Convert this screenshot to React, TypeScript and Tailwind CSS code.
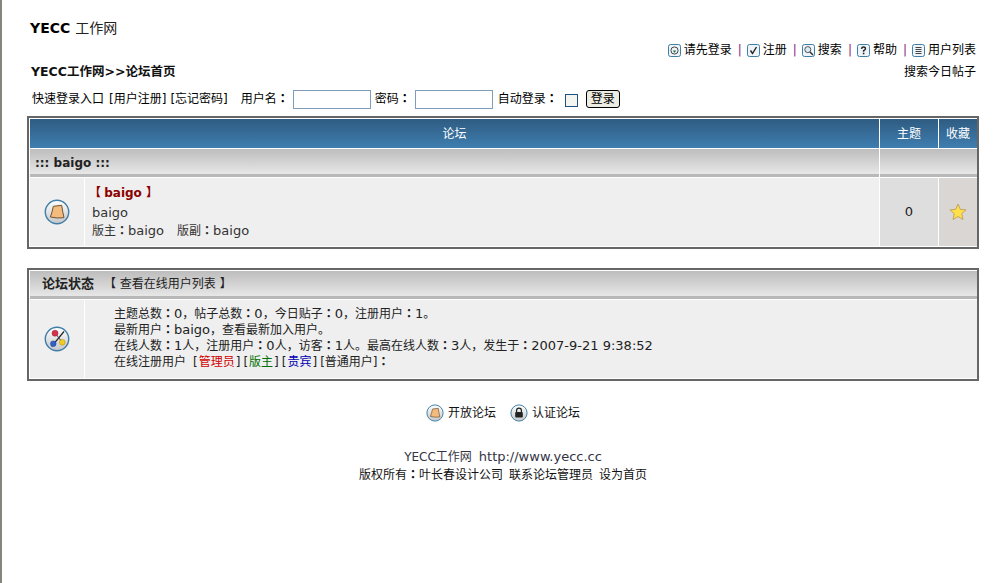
const font = { fontFamily: '"DejaVu Sans", "Noto Sans CJK SC", sans-serif' };

const RoundIcon = ({ size = 26, children }: { size?: number; children: React.ReactNode }) => (
  <svg width={size} height={size} viewBox="0 0 26 26" className="block shrink-0">
    <defs>
      <linearGradient id="ball" x1="0" y1="0" x2="0" y2="1">
        <stop offset="0" stopColor="#ffffff" />
        <stop offset="1" stopColor="#c4c6c8" />
      </linearGradient>
    </defs>
    <circle cx="13" cy="13" r="11.7" fill="url(#ball)" stroke="#3f7ea6" strokeWidth="1.4" />
    {children}
  </svg>
);

const PaperShape = () => (
  <path d="M9.3 7.3 L17.7 6.3 Q18.6 13 20 18.7 Q13 19.6 6.4 18 Q8.3 13 9.3 7.3 Z" fill="#f3bb7c" stroke="#6f5537" strokeWidth="1" strokeLinejoin="round" />
);

const StatsShape = () => (
  <g>
    <line x1="20" y1="5.5" x2="7.7" y2="20.3" stroke="#222" strokeWidth="1.2" />
    <line x1="11" y1="7" x2="18.3" y2="16.3" stroke="#444" strokeWidth="1" />
    <circle cx="11" cy="7.2" r="3" fill="#d9304e" stroke="#8a1a2c" strokeWidth="0.5" />
    <circle cx="18.3" cy="16.3" r="2.9" fill="#f2cc22" stroke="#a88a10" strokeWidth="0.5" />
    <circle cx="9.3" cy="17.7" r="2.8" fill="#2f62cc" stroke="#1a3a80" strokeWidth="0.5" />
  </g>
);

const SmallBox = ({ children }: { children: React.ReactNode }) => (
  <svg width="13" height="13" viewBox="0 0 13 13" className="block shrink-0">
    <rect x="0.5" y="0.5" width="12" height="12" rx="2" fill="#eef4f8" stroke="#3f7ea6" />
    {children}
  </svg>
);

const Sep = () => <span className="ml-[6px] mr-[5px] text-[#8a1a7a]">|</span>;

// latin runs are a size up from the chinese text
const L = ({ children }: { children: React.ReactNode }) => <span className="text-[13px] leading-none">{children}</span>;

// centred full width colon
const C = () => <span className="font-['Noto_Sans_CJK_TC'] font-bold leading-none">：</span>;

const NavItem = ({ icon, label }: { icon: React.ReactNode; label: string }) => (
  <span className="flex items-center gap-[3px]">
    {icon}
    {label}
  </span>
);

const headCell = "flex items-center justify-center bg-gradient-to-b from-[#2f5c82] to-[#3e7eb0]";
const barCell = "bg-gradient-to-b from-[#bdbdbd] to-[#ececec] shadow-[inset_0_-3px_0_#b8b8b8]";

const App = () => {
  return (
    <div style={font} className="min-h-[583px] border-l-2 border-[#85857b] bg-white pl-[25px] pr-[27px] text-[12px] leading-[14px] text-black">
      <div className="flex h-[36px] items-end pl-[3px]">
        <span className="text-[14px] font-bold leading-[16px]">YECC</span>
        <span className="ml-[5px] text-[14px] leading-[16px] text-[#222]">工作网</span>
      </div>

      <div className="mt-[7px] flex h-[14px] items-center justify-end pr-[3px]">
        <NavItem
          label="请先登录"
          icon={
            <SmallBox>
              <circle cx="6.5" cy="6.5" r="3.6" fill="none" stroke="#444" />
              <path d="M4.8 6.5 L8.2 6.5 L6.5 9 Z" fill="#2a7a4a" />
            </SmallBox>
          }
        />
        <Sep />
        <NavItem
          label="注册"
          icon={
            <SmallBox>
              <path d="M3.5 6.5 L5.5 9.5 L9.5 3" fill="none" stroke="#222" strokeWidth="1.4" />
            </SmallBox>
          }
        />
        <Sep />
        <NavItem
          label="搜索"
          icon={
            <SmallBox>
              <circle cx="5.8" cy="5.6" r="3" fill="#dceaf4" stroke="#555" />
              <path d="M8 8 L11 11" stroke="#333" strokeWidth="1.5" />
            </SmallBox>
          }
        />
        <Sep />
        <NavItem
          label="帮助"
          icon={
            <SmallBox>
              <path d="M4.5 4.8 Q4.8 3 6.6 3 Q8.6 3 8.4 4.8 Q8.2 5.8 6.6 6.6 L6.6 7.8" fill="none" stroke="#222" strokeWidth="1.5" />
              <rect x="5.8" y="8.7" width="1.6" height="1.6" fill="#222" />
            </SmallBox>
          }
        />
        <Sep />
        <NavItem
          label="用户列表"
          icon={
            <SmallBox>
              <path d="M3.5 3.5 H9.5 M3.5 5.5 H9.5 M3.5 7.5 H9.5 M3.5 9.5 H9.5" stroke="#444" />
            </SmallBox>
          }
        />
      </div>

      <div className="mt-[8px] flex h-[14px] items-center justify-between pl-[4px] pr-[3px]">
        <span className="text-[12.5px] font-bold text-[#111]">YECC工作网&gt;&gt;论坛首页</span>
        <span>搜索今日帖子</span>
      </div>

      <div className="mt-[8px] flex h-[24px] items-center pl-[5px]">
        <span>快速登录入口</span>
        <span className="ml-[5px]">[用户注册]</span>
        <span className="ml-[4px]">[忘记密码]</span>
        <span className="ml-[13px]">用户名<C /></span>
        <input className="ml-[4px] h-[19px] w-[78px] border border-[#7f9db9] bg-white" />
        <span className="ml-[4px]">密码<C /></span>
        <input className="ml-[4px] h-[19px] w-[78px] border border-[#7f9db9] bg-white" />
        <span className="ml-[5px]">自动登录<C /></span>
        <span className="ml-[7px] mt-[2px] h-[13px] w-[13px] border border-[#1c5180] bg-[#f4f4f0]" />
        <button className="ml-[8px] h-[18px] w-[34px] rounded-[3px] border border-black bg-[#ecebe4] text-[12px] leading-[14px]">登录</button>
      </div>

      <div className="mt-[5px] border-2 border-[#666] bg-white pb-[1px] pl-[1px] pt-[1px]">
        <div className="grid h-[29px] grid-cols-[1fr_58px_38px] gap-x-[1px] text-white">
          <div className={headCell}>论坛</div>
          <div className={headCell}>主题</div>
          <div className={headCell}>收藏</div>
        </div>
        <div className="mt-[1px] grid h-[28px] grid-cols-[1fr_97px] gap-x-[1px]">
          <div className={`${barCell} flex items-center pl-[5px] font-bold text-[#222]`}>::: baigo :::</div>
          <div className={barCell} />
        </div>
        <div className="mt-[1px] grid h-[68px] grid-cols-[54px_1fr_58px_38px] gap-x-[1px]">
          <div className="flex items-center justify-center bg-[#efefef]">
            <RoundIcon>
              <PaperShape />
            </RoundIcon>
          </div>
          <div className="bg-[#efefef] pl-[7px] pt-[7px] text-[#333]">
            <div className="-ml-[3px] h-[17px] font-bold leading-[16px] text-[#8b0000]">
              【<span className="ml-[-1px]"> baigo </span>】
            </div>
            <div className="mt-[3px] h-[16px] leading-[16px]">
              <L>baigo</L>
            </div>
            <div className="mt-[2px] h-[16px] leading-[16px]">
              版主<C /><L>baigo</L>
              <span className="ml-[13px]">版副<C /></span>
              <L>baigo</L>
            </div>
          </div>
          <div className="flex items-center justify-center bg-[#dedede] text-[13px] text-[#222]">0</div>
          <div className="flex items-center justify-center bg-[#d9d6d4]">
            <svg width="18" height="18" viewBox="0 0 18 18">
              <path d="M9 1 L11.3 6.4 L17 6.9 L12.7 10.7 L14 16.5 L9 13.5 L4 16.5 L5.3 10.7 L1 6.9 L6.7 6.4 Z" fill="#ffdf4a" stroke="#c4a55a" strokeLinejoin="round" />
            </svg>
          </div>
        </div>
      </div>

      <div className="mt-[19px] border-2 border-[#666] bg-white pb-[1px] pl-[1px] pt-[1px]">
        <div className={`${barCell} flex h-[28px] items-center pb-[2px] pl-[12px] text-[#222]`}>
          <span className="text-[13px] font-bold">论坛状态</span>
          <span className="ml-[10px]">【 查看在线用户列表 】</span>
        </div>
        <div className="mt-[1px] grid h-[78px] grid-cols-[54px_1fr] gap-x-[1px]">
          <div className="flex items-center justify-center bg-[#efefef]">
            <RoundIcon>
              <StatsShape />
            </RoundIcon>
          </div>
          <div className="bg-[#efefef] pl-[29px] pt-[6px] leading-[16px] text-[#222]">
            <div className="h-[16px]">主题总数<C /><L>0</L>，帖子总数<C /><L>0</L>，今日贴子<C /><L>0</L>，注册用户<C /><L>1</L>。</div>
            <div className="h-[16px]">最新用户<C /><L>baigo</L>，查看最新加入用户。</div>
            <div className="h-[16px]">在线人数<C /><L>1</L>人，注册用户<C /><L>0</L>人，访客<C /><L>1</L>人。最高在线人数<C /><L>3</L>人，发生于<C /><L>2007-9-21 9:38:52</L></div>
            <div className="h-[16px]">
              在线注册用户
              <span className="ml-[7px]">[<span className="px-[1px] text-[#d00000]">管理员</span>]</span>
              <span className="ml-[3px]">[<span className="px-[1px] text-[#007000]">版主</span>]</span>
              <span className="ml-[3px]">[<span className="px-[1px] text-[#0000b0]">贵宾</span>]</span>
              <span className="ml-[3px]">[普通用户]<C /></span>
            </div>
          </div>
        </div>
      </div>

      <div className="mt-[23px] flex items-center justify-center gap-[14px] text-[#111]">
        <span className="flex items-center gap-[4px]">
          <RoundIcon size={18}>
            <PaperShape />
          </RoundIcon>
          开放论坛
        </span>
        <span className="flex items-center gap-[4px]">
          <RoundIcon size={18}>
            <path d="M9.5 12 V9.5 A3.5 3.5 0 0 1 16.5 9.5 V12" fill="none" stroke="#222" strokeWidth="1.8" />
            <rect x="7.5" y="11.5" width="11" height="8" rx="1.5" fill="#222" />
          </RoundIcon>
          认证论坛
        </span>
      </div>

      <div className="mt-[26px] text-center leading-[18px]">
        <div className="h-[18px] text-[#334]">
          YECC工作网<span className="ml-[7px]"><L>http://www.yecc.cc</L></span>
        </div>
        <div className="h-[18px] text-[#111]">
          版权所有<C />叶长春设计公司<span className="ml-[6px]">联系论坛管理员</span><span className="ml-[6px]">设为首页</span>
        </div>
      </div>
    </div>
  );
};

export default App;
